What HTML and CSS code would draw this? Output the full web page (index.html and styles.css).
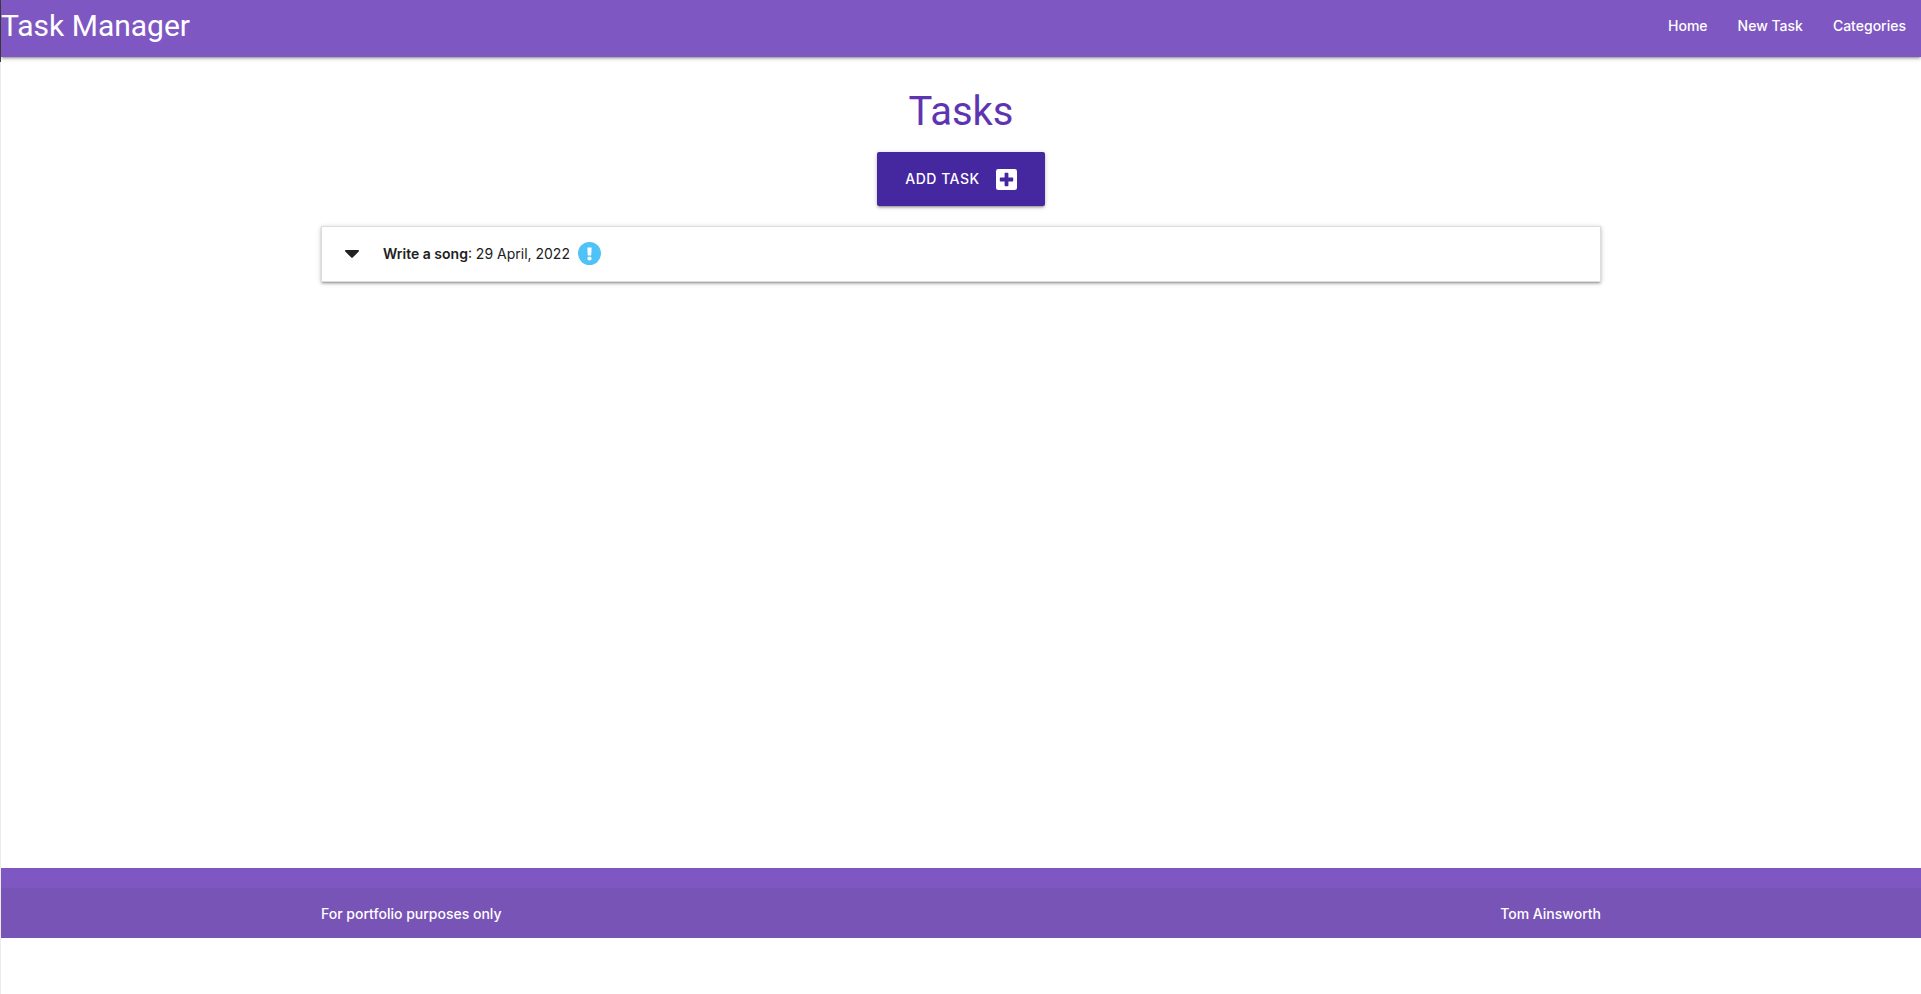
FILE: index.html
```html
<!DOCTYPE html>
<html lang="en">
<head>
  <meta charset="utf-8">
  <meta name="viewport" content="width=device-width, initial-scale=1">
  <title>Task Manager</title>
  <link rel="stylesheet" href="styles.css">
</head>
<body>
  <header>
    <nav class="navbar">
      <a class="brand" href="#">Task Manager</a>
      <ul class="nav-links">
        <li><a href="#">Home</a></li>
        <li><a href="#">New Task</a></li>
        <li><a href="#">Categories</a></li>
      </ul>
    </nav>
  </header>

  <main class="container">
    <h1 class="page-title">Tasks</h1>
    <div class="actions">
      <a class="btn-large" href="#">Add Task
        <svg class="btn-icon" viewBox="0 0 21 21" aria-hidden="true">
          <path fill="currentColor" fill-rule="evenodd" d="M2.300 0h16.400a2.300 2.300 0 0 1 2.300 2.300v16.400a2.300 2.300 0 0 1-2.300 2.300H2.300A2.300 2.300 0 0 1 0 18.700V2.300A2.300 2.300 0 0 1 2.300 0zM9.200 3.800a.6.6 0 0 0-.6.600v4.200H4.400a.6.6 0 0 0-.6.600v2.600a.6.6 0 0 0 .6.600h4.200v4.200a.6.6 0 0 0 .6.600h2.600a.6.6 0 0 0 .6-.6v-4.200h4.200a.6.6 0 0 0 .6-.6V9.200a.6.6 0 0 0-.6-.6h-4.200V4.400a.6.6 0 0 0-.6-.6z"/>
        </svg>
      </a>
    </div>
    <ul class="collapsible">
      <li>
        <button class="collapsible-header" type="button" aria-expanded="false">
          <svg class="caret" viewBox="0 0 14 8" aria-hidden="true">
            <path fill="currentColor" d="M1 0h12c.9 0 1.300 1 .7 1.600l-6 6a1 1 0 0 1-1.400 0l-6-6C-.3 1 .1 0 1 0z"/>
          </svg>
          <span class="task"><strong>Write a song</strong>: 29 April, 2022</span>
          <svg class="urgent" viewBox="0 0 23 23" role="img" aria-label="Urgent">
            <circle cx="11.5" cy="11.5" r="11.500" fill="#4fc3f7"/>
            <path fill="#fff" d="M9.900 5.500h3.200a.5.5 0 0 1 .5.600l-.3 6.800a.6.6 0 0 1-.6.500h-2.400a.6.6 0 0 1-.6-.5L9.400 6.100a.5.5 0 0 1 .5-.6z"/>
            <circle cx="11.500" cy="16.500" r="2.100" fill="#fff"/>
          </svg>
        </button>
      </li>
    </ul>
  </main>

  <footer class="page-footer">
    <div class="footer-copyright">
      <div class="container footer-row">
        <span>For portfolio purposes only</span>
        <span>Tom Ainsworth</span>
      </div>
    </div>
  </footer>
</body>
</html>
```

FILE: styles.css
```css
* {
  box-sizing: border-box;
}

html {
  background: #fff;
}

body {
  display: flex;
  flex-direction: column;
  min-height: 100vh;
  margin: 0;
  padding: 0 0 56px 1px;
  background: linear-gradient(#424242 62px, #ebebeb 62px) left top / 1px 100% no-repeat;
  color: #212121;
  font-family: Inter, "Liberation Sans", sans-serif;
  font-size: 14px;
  line-height: 22px;
}

a {
  color: inherit;
  text-decoration: none;
}

ul {
  margin: 0;
  padding: 0;
  list-style: none;
}

.navbar {
  display: flex;
  justify-content: space-between;
  height: 57px;
  background: #7e57c2;
  color: #fff;
  line-height: 52px;
  box-shadow: 0 2px 2px 0 rgba(0, 0, 0, .14), 0 3px 1px -2px rgba(0, 0, 0, .12), 0 1px 5px 0 rgba(0, 0, 0, .2);
}

.brand {
  font-family: Roboto, "Liberation Sans", sans-serif;
  font-size: 30px;
}

.nav-links {
  display: flex;
  font-weight: 500;
}

.nav-links a {
  display: block;
  padding: 0 15px;
}

.container {
  width: 100%;
  max-width: 1280px;
  margin: 0 auto;
}

main.container {
  flex: 1;
}

.page-title {
  margin: 30px 0 16px;
  color: #5e35b1;
  font-family: Roboto, "Liberation Sans", sans-serif;
  font-size: 40px;
  font-weight: 400;
  line-height: 49px;
  text-align: center;
}

.actions {
  display: flex;
  justify-content: center;
}

.btn-large {
  display: flex;
  align-items: center;
  gap: 16px;
  height: 54px;
  padding: 0 28px;
  border-radius: 2px;
  background: #4527a0;
  color: #fff;
  font-weight: 500;
  letter-spacing: .5px;
  text-transform: uppercase;
  box-shadow: 0 2px 2px 0 rgba(0, 0, 0, .14), 0 3px 1px -2px rgba(0, 0, 0, .12), 0 1px 5px 0 rgba(0, 0, 0, .2);
}

.btn-icon {
  width: 21px;
  height: 21px;
}

.collapsible {
  margin: 20px 0 16px;
  border: 1px solid #ddd;
  border-bottom: 0;
  box-shadow: 0 2px 2px 0 rgba(0, 0, 0, .14), 0 3px 1px -2px rgba(0, 0, 0, .12), 0 1px 5px 0 rgba(0, 0, 0, .2);
}

.collapsible-header {
  display: flex;
  align-items: center;
  width: 100%;
  padding: 15px 23px 16px;
  border: 0;
  border-bottom: 1px solid #ddd;
  background: #fff;
  color: inherit;
  font: inherit;
  text-align: left;
  cursor: pointer;
}

.caret {
  width: 14px;
  height: 8px;
  margin-right: 24px;
}

.task strong {
  font-weight: 600;
}

.urgent {
  width: 23px;
  height: 23px;
  margin-left: 8px;
}

.page-footer {
  padding-top: 20px;
  background: #7e57c2;
  color: #fff;
  font-weight: 500;
}

.footer-copyright {
  padding: 15px 0 13px;
  background: rgba(51, 51, 51, .08);
}

.footer-row {
  display: flex;
  justify-content: space-between;
}
```
